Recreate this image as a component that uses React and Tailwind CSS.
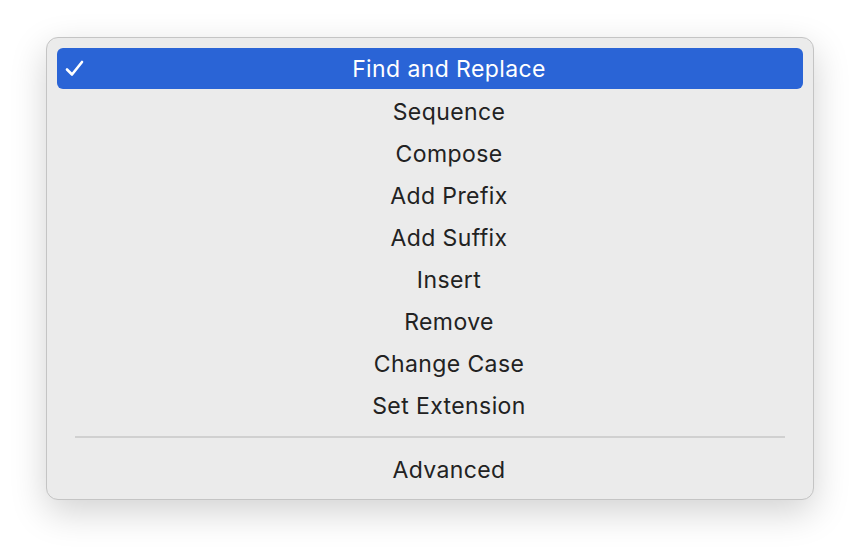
import React from "react";

const items = ["Sequence","Compose","Add Prefix","Add Suffix","Insert","Remove","Change Case","Set Extension"];

export default function App() {
  return (
    <div className="w-[860px] h-[554px] bg-white pt-[37px] pl-[46px]" style={{ fontFamily: "Inter, 'Liberation Sans', sans-serif" }}>
      <div className="w-[768px] h-[463px] rounded-[12px] bg-[#ebebeb] border border-[#c4c4c4] shadow-[0_12px_36px_rgba(0,0,0,0.18)] p-[10px] box-border">
        <div className="relative h-[41px] mb-px rounded-[6px] bg-[#2a64d6] text-white flex items-center justify-center pl-[38px] pt-[2px] text-[23px] tracking-[0.4px] leading-none">
          <svg className="absolute left-[8px] top-[12px]" width="19" height="17" viewBox="0 0 19 17" fill="none">
            <path d="M2 9.5 L7 14.5 L17 2" stroke="white" strokeWidth="2.6" strokeLinecap="round" strokeLinejoin="round" />
          </svg>
          <span>Find and Replace</span>
        </div>
        {items.map((t) => (
          <div key={t} className="h-[42px] flex items-center justify-center pl-[38px] pt-[2px] text-[23px] tracking-[0.4px] leading-none text-[#222]">{t}</div>
        ))}
        <div className="h-[22px] flex items-center px-[18px]">
          <div className="h-[2px] w-full bg-[#d0d0d0]" />
        </div>
        <div className="h-[42px] flex items-center justify-center pl-[38px] pt-[2px] text-[23px] tracking-[0.4px] leading-none text-[#222]">Advanced</div>
      </div>
    </div>
  );
}
